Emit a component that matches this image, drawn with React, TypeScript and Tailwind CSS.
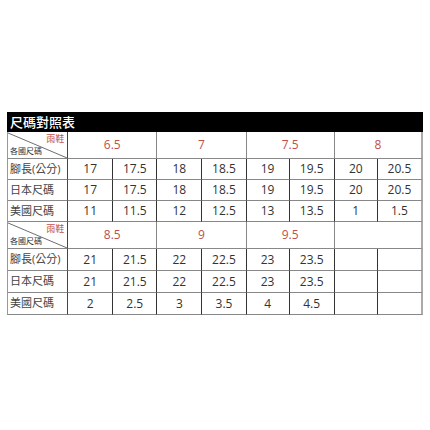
const widths = [61, 45, 44, 45, 44, 43, 45, 43, 45];

type Section = {
  groups: string[];
  rows: { label: string; values: string[] }[];
  rowH: string;
};

const sections: Section[] = [
  {
    groups: ["6.5", "7", "7.5", "8"],
    rowH: "h-[21px]",
    rows: [
      { label: "腳長(公分)", values: ["17", "17.5", "18", "18.5", "19", "19.5", "20", "20.5"] },
      { label: "日本尺碼", values: ["17", "17.5", "18", "18.5", "19", "19.5", "20", "20.5"] },
      { label: "美國尺碼", values: ["11", "11.5", "12", "12.5", "13", "13.5", "1", "1.5"] },
    ],
  },
  {
    groups: ["8.5", "9", "9.5", ""],
    rowH: "h-[22px]",
    rows: [
      { label: "腳長(公分)", values: ["21", "21.5", "22", "22.5", "23", "23.5", "", ""] },
      { label: "日本尺碼", values: ["21", "21.5", "22", "22.5", "23", "23.5", "", ""] },
      { label: "美國尺碼", values: ["2", "2.5", "3", "3.5", "4", "4.5", "", ""] },
    ],
  },
];

function DiagonalCell() {
  return (
    <td className="relative p-0 border-l border-b border-r border-l-[#999] border-b-[#888] border-r-[#444]">
      <svg className="absolute inset-0 h-full w-full" viewBox="0 0 60 27" preserveAspectRatio="none">
        <line x1="0" y1="1" x2="60" y2="27" stroke="#444" strokeWidth="0.8" />
      </svg>
      <span className="absolute right-[3px] top-[2px] text-[9px] leading-none text-[#c0504d]">雨鞋</span>
      <span className="absolute left-[2px] bottom-[3px] text-[8px] leading-none text-[#333]">各國尺碼</span>
    </td>
  );
}

export default function App() {
  return (
    <div
      className="w-[430px] h-[430px] bg-white pt-[112px] pl-[7px]"
      style={{ fontFamily: '"Open Sans", "Noto Sans CJK TC", sans-serif' }}
    >
      <div className="w-[416px] h-[20px] bg-black flex items-center pl-[3px]">
        <span className="text-white text-[13px] font-medium leading-none">尺碼對照表</span>
      </div>
      <table className="table-fixed border-separate border-spacing-0 w-[416px]">
        <colgroup>
          {widths.map((w, i) => (
            <col key={i} style={{ width: w }} />
          ))}
        </colgroup>
        <tbody>
          {sections.map((s, si) => (
            <SectionRows key={si} section={s} />
          ))}
        </tbody>
      </table>
    </div>
  );
}

function SectionRows({ section }: { section: Section }) {
  return (
    <>
      <tr className="h-[27px]">
        <DiagonalCell />
        {section.groups.map((g, i) => (
          <td
            key={i}
            colSpan={2}
            className={
              "p-0 text-center text-[12px] text-[#c0504d] border-b border-b-[#888] " +
              (i === 3 ? "border-r-2 border-r-[#aaa]" : "border-r border-r-[#888]")
            }
          >
            {g}
          </td>
        ))}
      </tr>
      {section.rows.map((r, ri) => (
        <tr key={ri} className={section.rowH}>
          <td className="p-0 pl-[2px] text-[11px] text-[#444] whitespace-nowrap border-l border-b border-r border-l-[#999] border-b-[#888] border-r-[#444]">
            {r.label}
          </td>
          {r.values.map((v, vi) => (
            <td
              key={vi}
              className={
                "p-0 text-center text-[12px] text-[#333] border-b border-b-[#888] " +
                (vi === 7 ? "border-r-2 border-r-[#aaa]" : "border-r border-r-[#333]")
              }
            >
              {v}
            </td>
          ))}
        </tr>
      ))}
    </>
  );
}
